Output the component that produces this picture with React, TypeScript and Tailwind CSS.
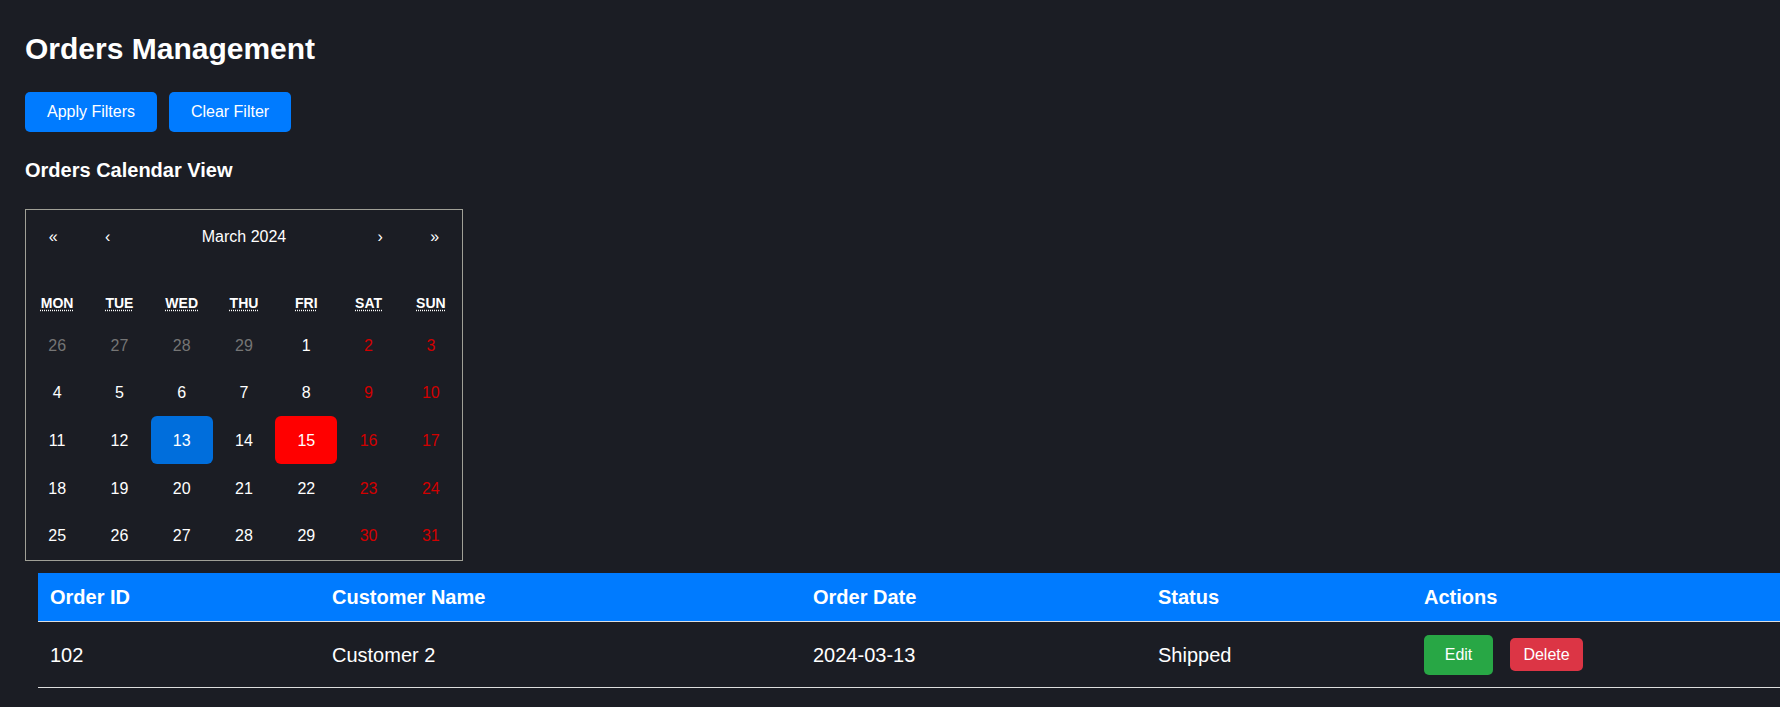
import React from "react";

type Day = { n: number; kind: "prev" | "week" | "weekend"; active?: "blue" | "red" };

const weekdays = [
  { s: "MON", t: "Monday" },
  { s: "TUE", t: "Tuesday" },
  { s: "WED", t: "Wednesday" },
  { s: "THU", t: "Thursday" },
  { s: "FRI", t: "Friday" },
  { s: "SAT", t: "Saturday" },
  { s: "SUN", t: "Sunday" },
];

function buildDays(): Day[] {
  const days: Day[] = [];
  [26, 27, 28, 29].forEach((n) => days.push({ n, kind: "prev" }));
  for (let n = 1; n <= 31; n++) {
    const idx = days.length % 7;
    const kind = idx >= 5 ? "weekend" : "week";
    const d: Day = { n, kind };
    if (n === 13) d.active = "blue";
    if (n === 15) d.active = "red";
    days.push(d);
  }
  return days;
}

function DayTile({ d }: { d: Day }) {
  let cls = "flex h-[47.6px] items-center justify-center rounded-[6px] pt-[2px] text-[16px] leading-[18px]";
  if (d.active === "blue") cls += " bg-[#006edc] text-white";
  else if (d.active === "red") cls += " bg-[#ff0000] text-white";
  else if (d.kind === "prev") cls += " text-[#757575]";
  else if (d.kind === "weekend") cls += " text-[#d10000]";
  else cls += " text-white";
  return <div className={cls}>{d.n}</div>;
}

function Calendar() {
  const days = buildDays();
  return (
    <div className="w-[438px] border border-[#a0a096] pb-[1px]">
      <div className="grid h-[52px] grid-cols-8 items-center pt-[2px] text-[16px] text-white">
        <div className="flex justify-center">«</div>
        <div className="flex justify-center">‹</div>
        <div className="col-span-4 flex justify-center">March 2024</div>
        <div className="flex justify-center">›</div>
        <div className="flex justify-center">»</div>
      </div>
      <div className="mt-[23px] grid h-[36px] grid-cols-7 items-center">
        {weekdays.map((w) => (
          <div key={w.s} className="flex justify-center">
            <abbr
              title={w.t}
              className="text-[14px] font-bold uppercase text-white underline decoration-dotted underline-offset-[2px]"
            >
              {w.s}
            </abbr>
          </div>
        ))}
      </div>
      <div className="grid grid-cols-7">
        {days.map((d, i) => (
          <DayTile key={i} d={d} />
        ))}
      </div>
    </div>
  );
}

export default function App() {
  return (
    <div className="min-h-[707px] w-full overflow-hidden bg-[#1b1d24] font-['Liberation_Sans',Arial,sans-serif] text-white">
      <div className="pl-[25px] pt-[32px]">
        <h1 className="text-[30px] font-bold leading-[34px]">Orders Management</h1>
        <div className="mt-[26px] flex gap-[12px]">
          <button className="flex h-[40px] w-[132px] items-center justify-center rounded-[5px] bg-[#007bff] text-[16px] text-white">
            Apply Filters
          </button>
          <button className="flex h-[40px] w-[122px] items-center justify-center rounded-[5px] bg-[#007bff] text-[16px] text-white">
            Clear Filter
          </button>
        </div>
        <h2 className="mt-[27px] text-[20px] font-bold leading-[23px]">Orders Calendar View</h2>
        <div className="mt-[27px]">
          <Calendar />
        </div>
      </div>
      <div className="ml-[38px] mt-[12px]">
        <table className="w-[1742px] table-fixed border-collapse text-left">
          <colgroup>
            <col className="w-[282px]" />
            <col className="w-[481px]" />
            <col className="w-[345px]" />
            <col className="w-[266px]" />
            <col />
          </colgroup>
          <thead>
            <tr className="border-b border-[#dddddd] bg-[#007bff]">
              <th className="px-[12px] py-[12px] text-[20px] font-bold leading-[24px]">Order ID</th>
              <th className="px-[12px] py-[12px] text-[20px] font-bold leading-[24px]">Customer Name</th>
              <th className="px-[12px] py-[12px] text-[20px] font-bold leading-[24px]">Order Date</th>
              <th className="px-[12px] py-[12px] text-[20px] font-bold leading-[24px]">Status</th>
              <th className="px-[12px] py-[12px] text-[20px] font-bold leading-[24px]">Actions</th>
            </tr>
          </thead>
          <tbody>
            <tr className="border-b border-[#dddddd]">
              <td className="px-[12px] pb-[12px] pt-[13px] align-middle text-[20px]">102</td>
              <td className="px-[12px] pb-[12px] pt-[13px] align-middle text-[20px]">Customer 2</td>
              <td className="px-[12px] pb-[12px] pt-[13px] align-middle text-[20px]">2024-03-13</td>
              <td className="px-[12px] pb-[12px] pt-[13px] align-middle text-[20px]">Shipped</td>
              <td className="px-[12px] pb-[12px] pt-[13px] align-middle">
                <div className="flex h-[40px] items-center gap-[17px]">
                  <button className="flex h-[40px] w-[69px] items-center justify-center rounded-[5px] bg-[#28a745] text-[16px] text-white">
                    Edit
                  </button>
                  <button className="flex h-[33px] w-[73px] items-center justify-center rounded-[5px] bg-[#dc3545] text-[16px] text-white">
                    Delete
                  </button>
                </div>
              </td>
            </tr>
          </tbody>
        </table>
      </div>
    </div>
  );
}
